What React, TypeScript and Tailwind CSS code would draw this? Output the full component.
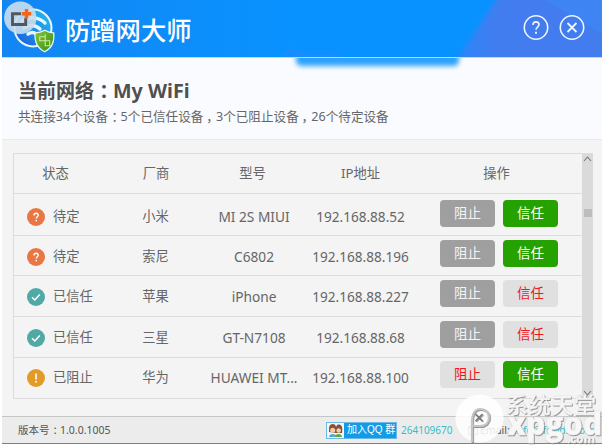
import React from 'react';

const sans = "font-['Noto_Sans','Noto_Sans_CJK_SC',sans-serif]";

type Status = 'pending' | 'trusted' | 'blocked';
type Tone = 'gray' | 'green' | 'light';

interface Device {
  status: Status;
  label: string;
  vendor: string;
  model: string;
  ip: string;
  block: Tone;
  trust: Tone;
  row: string;
}

const devices: Device[] = [
  { status: 'pending', label: '待定', vendor: '小米', model: 'MI 2S MIUI', ip: '192.168.88.52', block: 'gray', trust: 'green', row: 'h-[42px] pt-[6px]' },
  { status: 'pending', label: '待定', vendor: '索尼', model: 'C6802', ip: '192.168.88.196', block: 'gray', trust: 'green', row: 'h-[40px] pt-[4px]' },
  { status: 'trusted', label: '已信任', vendor: '苹果', model: 'iPhone', ip: '192.168.88.227', block: 'gray', trust: 'light', row: 'h-[41px] pt-[4px]' },
  { status: 'trusted', label: '已信任', vendor: '三星', model: 'GT-N7108', ip: '192.168.88.68', block: 'gray', trust: 'light', row: 'h-[41px] pt-[4px]' },
  { status: 'blocked', label: '已阻止', vendor: '华为', model: 'HUAWEI MT...', ip: '192.168.88.100', block: 'light', trust: 'green', row: 'h-[41px] pt-[3px]' },
];

const tones: Record<Tone, string> = {
  gray: 'bg-[#9f9f9f] text-[#f4f4f4]',
  green: 'bg-[#25a100] text-white',
  light: 'bg-[#e0e0e0] text-[#f01818]',
};

// Full-width punctuation, nudged towards the middle of its cell.
const Colon = () => <span className="-mr-[0.28em] ml-[0.28em]">：</span>;
const Comma = () => <span className="-mr-[0.22em] ml-[0.22em]">，</span>;

function StatusIcon({ status }: { status: Status }) {
  const fill = { pending: '#e87743', trusted: '#51a9a6', blocked: '#e29b28' }[status];
  return (
    <svg width="18" height="18" viewBox="0 0 18 18" fill="none" stroke="white" strokeWidth="1.5" className="shrink-0">
      <circle cx="9" cy="9" r="9" fill={fill} stroke="none" />
      {status === 'pending' && (
        <>
          <path d="M7 7.4c0-1.400.8-2.200 2.100-2.200s2.100.8 2.100 2c0 1.500-1.900 1.700-1.900 3.300" strokeWidth="1.400" />
          <circle cx="9.300" cy="12.600" r=".85" fill="white" stroke="none" />
        </>
      )}
      {status === 'trusted' && <path d="M5 9.200l2.800 2.800 5-5.600" />}
      {status === 'blocked' && (
        <>
          <path d="M9 4.500v6" strokeWidth="1.600" />
          <circle cx="9" cy="12.800" r=".95" fill="white" stroke="none" />
        </>
      )}
    </svg>
  );
}

function ActionButton({ tone, children }: { tone: Tone; children: React.ReactNode }) {
  return (
    <button className={`flex h-[27px] w-[55px] items-center justify-center rounded-[4px] text-[13.5px] leading-none ${tones[tone]}`}>
      {children}
    </button>
  );
}

function Logo() {
  return (
    <svg width="56" height="54" viewBox="0 0 56 54" className="shrink-0">
      <defs>
        <linearGradient id="globe" x1="1" y1="0" x2="0" y2="1">
          <stop offset="0" stopColor="#27c3e8" />
          <stop offset=".5" stopColor="#1c8fee" />
          <stop offset="1" stopColor="#1d58d6" />
        </linearGradient>
        <linearGradient id="shield" x1="0" y1="0" x2="1" y2="1">
          <stop offset="0" stopColor="#8cc63a" />
          <stop offset="1" stopColor="#2f8d12" />
        </linearGradient>
      </defs>
      <circle cx="31" cy="28" r="18.500" fill="url(#globe)" stroke="#e8f7ff" strokeWidth="2" />
      <g fill="none" stroke="#e6f6ff" strokeWidth="3.400" strokeLinecap="round">
        <path d="M20 21c7-5 17-4 23 2" />
        <path d="M22 28c5-4 12-3 16 1" />
        <path d="M26 34c3-2 6-2 8 0" />
      </g>
      <circle cx="18.300" cy="17.800" r="16.200" fill="#c9deed" fillOpacity=".9" />
      <path d="M19 13.700H10.500v10.800H23.700v-6.500" fill="none" stroke="#54585c" strokeWidth="2.900" />
      <path d="M24.500 9v9.400M19.800 13.700h9.400" stroke="#f0661d" strokeWidth="3.500" />
      <g transform="translate(-.8 .3)">
        <path d="M34 32.500c4 0 7-1 9.500-2.500 2.500 1.500 5.500 2.500 9 2.500 1 9-2 15.500-9 19-7-3.500-10.500-10-9.500-19z" fill="url(#shield)" stroke="#eaf7ee" strokeWidth="1.200" />
        <path d="M44 34v12M38 40.500h11M38.500 40v-3.500H44M44 45.500h4.500V41" fill="none" stroke="#cdeaa0" strokeWidth="1.100" />
      </g>
    </svg>
  );
}

function Header() {
  return (
    <header className="relative flex h-[57px] shrink-0 bg-[#0892ff]">
      <svg className="absolute inset-0" width="600" height="57">
        <defs>
          <linearGradient id="edge">
            <stop offset="0" stopColor="#1486f2" />
            <stop offset="1" stopColor="#0892ff" />
          </linearGradient>
          <linearGradient id="right">
            <stop offset="0" stopColor="#2b86f8" />
            <stop offset=".3" stopColor="#427df0" />
            <stop offset="1" stopColor="#427bed" />
          </linearGradient>
          <filter id="soft"><feGaussianBlur stdDeviation="2" /></filter>
        </defs>
        <rect width="290" height="57" fill="url(#edge)" />
        <path d="M281 60V54l8-7 12 5h36v8z" fill="#3387fa" opacity=".4" filter="url(#soft)" />
        <path d="M498-6l-46 70h154V-6z" fill="url(#right)" filter="url(#soft)" />
        <path d="M543 0h57v34z" fill="#3e84f2" />
      </svg>
      <div className="relative flex w-full items-start">
        <Logo />
        <h1 className="ml-[7px] mt-[14px] grow font-['Noto_Sans_CJK_SC',sans-serif] text-[25.300px] font-medium leading-[30px] text-white">防蹭网大师</h1>
        <div className="mr-[17.500px] mt-[14px] flex gap-[10px]">
          <svg width="26" height="26" viewBox="0 0 26 26" fill="none" stroke="#eef6ff" strokeWidth="1.600">
            <circle cx="13" cy="13.500" r="11.700" />
            <path d="M10 11c0-2 1.200-3.100 3-3.100s3 1 3 2.700c0 2.300-3 2.600-3 5.100" />
            <path d="M13 17.700v2" strokeWidth="1.900" />
          </svg>
          <svg width="26" height="26" viewBox="0 0 26 26" fill="none" stroke="#eef6ff" strokeWidth="1.600">
            <circle cx="13" cy="13.500" r="11.700" />
            <path d="M8.500 9l9 9M17.500 9l-9 9" strokeWidth="1.800" />
          </svg>
        </div>
      </div>
    </header>
  );
}

function Scrollbar() {
  return (
    <div className="flex w-[11px] flex-col items-center bg-[#dadada]">
      <svg width="11" height="10" fill="none" stroke="#777" strokeWidth="1.100"><path d="M2 7l3.500-4L9 7" /></svg>
      <div className="mt-[45px] h-[8px] w-[8px] bg-[#bdbdbd]" />
      <div className="grow" />
      <svg width="11" height="10" fill="none" stroke="#777" strokeWidth="1.100"><path d="M2 3l3.500 4L9 3" /></svg>
    </div>
  );
}

function Watermark() {
  return (
    <svg className="absolute left-[452px] top-[386px]" width="152" height="60" viewBox="452 386 152 60">
      <defs>
        <filter id="emboss" x="-10%" y="-10%" width="125%" height="125%">
          <feDropShadow dx=".8" dy=".9" stdDeviation=".7" floodColor="#777" floodOpacity=".85" />
        </filter>
      </defs>
      <circle cx="479.500" cy="418.500" r="24" fill="white" fillOpacity=".85" />
      <g fill="none" filter="url(#emboss)">
        <path d="M472 442v-20c0-8 3-13 8-13 5.500 0 9 3.500 9 8.500s-3.500 8.500-9 8.500h-7" stroke="#c4c4c4" strokeWidth="2.200" />
        <path d="M475.500 414l7 7M482.500 414l-7 7" stroke="#777" strokeWidth="1.500" />
      </g>
      <g filter="url(#emboss)" fill="#f7f7f7" stroke="#e4e4e4" strokeWidth=".3">
        <text x="506" y="412.500" fontSize="22" fontWeight="500" textLength="90" fontFamily="'Noto Sans CJK SC', sans-serif">系统天堂</text>
        <text x="507" y="434.500" fontSize="32" fontWeight="800" textLength="95" lengthAdjust="spacingAndGlyphs" fontFamily="'Open Sans', sans-serif">xpgod</text>
        <text x="567" y="442.500" fontSize="11" fontWeight="700" textLength="28" lengthAdjust="spacingAndGlyphs" fontFamily="'Open Sans', sans-serif">.com</text>
      </g>
    </svg>
  );
}

function Footer() {
  return (
    <footer className="flex h-[28px] shrink-0 items-center border-b border-t border-b-[#808080] border-t-[#c6c6c6] bg-[#ececec] text-[10.500px] leading-none text-[#555]">
      <span className="ml-[16px] w-[308px] whitespace-nowrap">版本号<Colon />1.0.0.1005</span>
      <div className="flex h-[17px] w-[71px] items-center border border-[#6cb8e6] bg-[#129be6]">
        <svg width="17" height="15" viewBox="0 0 17 15" className="shrink-0">
          <rect width="17" height="15" fill="#f4f7f8" />
          <path d="M2 14c0-4 7-4 8 0z" fill="#55a8cf" />
          <path d="M8 14c0-4 7-4 7 0z" fill="#62a545" />
          <path d="M2 9V5c0-5 7-5 7-1l1-2c5-2 6 3 5 8H9z" fill="#8a5034" />
          <circle cx="5.700" cy="7.300" r="2.500" fill="#f4cda9" />
          <circle cx="11.700" cy="7.500" r="2.300" fill="#f4cda9" />
        </svg>
        <span className="ml-[3px] whitespace-nowrap font-['Liberation_Sans','Noto_Sans_CJK_SC',sans-serif] text-[10px] text-white">加入QQ 群</span>
      </div>
      <span className="ml-[4px] w-[67px] text-[10px] text-[#35bdca]">264109670</span>
      <svg width="10" height="9" viewBox="0 0 10 9" fill="none" stroke="#888"><path d="M.5.5h9v8h-9zM.5.500L5 5 9.500.500" /></svg>
      <span className="ml-[2px]">Email:</span>
      <span className="ml-[4px] text-[#35bdca]">info@fcwds.com</span>
    </footer>
  );
}

export default function App() {
  return (
    <div className={`relative h-[446px] w-[604px] overflow-hidden bg-white px-[2px] text-[#666] ${sans}`}>
      <div className="flex h-[444px] flex-col bg-[#f4f4f4]">
        <Header />
        <section className="relative h-[83px] shrink-0 overflow-hidden border-b border-t border-b-[#e9e9e9] border-t-[#b9daf8] bg-[#fafbfe] pl-[16px]">
          <div className="absolute left-[294px] top-[-12px] h-[20px] w-[163px] rounded-[5px] bg-[#0892ff] opacity-85 blur-[2.500px]" />
          <h2 className="mt-[21px] whitespace-nowrap text-[19px] font-bold leading-[24px] text-[#505050]">当前网络<Colon /><span className="text-[19.700px]">My WiFi</span></h2>
          <p className="mt-[4px] whitespace-nowrap text-[12.600px] leading-[20px]">共连接34个设备<Colon />5个已信任设备<Comma />3个已阻止设备<Comma />26个待定设备</p>
        </section>
        <main className="flex grow pl-[11px] pt-[13px]">
          <div className="flex h-[246px] border-y border-l border-[#dcdcdc] text-[13.300px] leading-none">
            <div className="w-[568px]">
              <div className="flex h-[39px] items-center text-center">
                <span className="w-[83px]">状态</span>
                <span className="w-[118px]">厂商</span>
                <span className="w-[75px]">型号</span>
                <span className="w-[141px]">IP地址</span>
                <span className="w-[131px]">操作</span>
              </div>
              {devices.map((d) => (
                <div key={d.ip} className={`flex items-start border-t border-[#dcdcdc] ${d.row}`}>
                  <div className="mt-[3px] flex h-[27px] items-center whitespace-nowrap">
                    <div className="flex w-[108px] items-center gap-[8px] pl-[13px]">
                      <StatusIcon status={d.status} />
                      <span>{d.label}</span>
                    </div>
                    <span className="w-[67px] text-center">{d.vendor}</span>
                    <span className="w-[130px] text-center text-[13.700px]">{d.model}</span>
                    <span className="w-[83px] text-center text-[13.600px]"><span className="-mx-[10px]">{d.ip}</span></span>
                  </div>
                  <div className="ml-[38px] flex gap-[8px]">
                    <ActionButton tone={d.block}>阻止</ActionButton>
                    <ActionButton tone={d.trust}>信任</ActionButton>
                  </div>
                </div>
              ))}
            </div>
            <Scrollbar />
          </div>
        </main>
        <Footer />
      </div>
      <Watermark />
    </div>
  );
}
